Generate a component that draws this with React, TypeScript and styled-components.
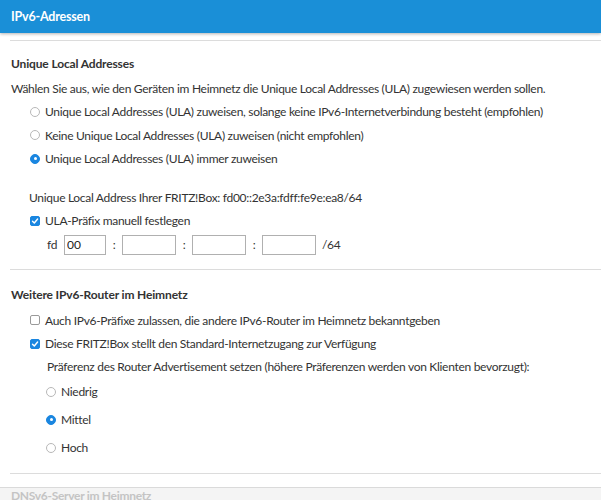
import React from 'react';
import styled, {createGlobalStyle} from 'styled-components';

const GlobalStyle = createGlobalStyle`
  html, body {
    margin: 0;
    padding: 0;
    overflow: hidden;
    background: #fff;
  }
  body {
    font-family: Lato, "Noto Sans", sans-serif;
    font-size: 12px;
    letter-spacing: -0.3px;
    color: #333;
  }
`

const Page = styled.div`
  height: 500px;
  overflow: hidden;
  display: flex;
  flex-direction: column;
`

const Header = styled.header`
  height: 33px;
  flex-shrink: 0;
  background: #1a8fd7;
  color: #fff;
  font-size: 12.5px;
  font-weight: 700;
  letter-spacing: -0.2px;
  display: flex;
  align-items: center;
  padding-left: 11px;
  box-shadow: 0 1px 3px rgba(0, 0, 0, 0.3);
`

const Content = styled.main`
  padding: 7px 0 0 10px;
`

const Section = styled.section<{$top: number; $bottom: number}>`
  border-top: 1px solid #dcdcdc;
  padding: ${p => p.$top}px 0 ${p => p.$bottom}px 1px;
  display: flex;
  flex-direction: column;
`

const Heading = styled.h2`
  margin: 0;
  font-size: 12px;
  font-weight: 700;
  letter-spacing: -0.15px;
  height: 24px;
  line-height: 24px;
`

const Row = styled.div<{$indent?: number; $h?: number}>`
  display: flex;
  align-items: center;
  gap: 5px;
  height: ${p => p.$h ?? 23.5}px;
  padding-left: ${p => p.$indent ?? 0}px;
  white-space: nowrap;
`

const Spacer = styled.div<{$h: number}>`
  height: ${p => p.$h}px;
`

const RadioDot = styled.span<{$on?: boolean}>`
  width: 10px;
  height: 10px;
  box-sizing: border-box;
  border-radius: 50%;
  flex-shrink: 0;
  border: 1px solid ${p => (p.$on ? '#1a86e0' : '#b8b8b8')};
  background: ${p => (p.$on ? '#1a86e0' : '#fff')};
  display: flex;
  align-items: center;
  justify-content: center;

  &::after {
    content: '';
    width: 3px;
    height: 3px;
    border-radius: 50%;
    background: #fff;
    display: ${p => (p.$on ? 'block' : 'none')};
  }
`

const CheckBox = styled.span<{$on?: boolean}>`
  width: 10px;
  height: 10px;
  box-sizing: border-box;
  border-radius: 2px;
  flex-shrink: 0;
  border: 1px solid ${p => (p.$on ? '#1a86e0' : '#9a9a9a')};
  background: ${p => (p.$on ? '#1a86e0' : '#fff')};
  display: flex;
  align-items: center;
  justify-content: center;
`

const FieldRow = styled.div`
  display: flex;
  align-items: center;
  height: 24px;
  padding-left: 36px;
`

const Label = styled.span`
  width: 17px;
`

const Box = styled.input<{$w: number}>`
  width: ${p => p.$w}px;
  height: 20px;
  box-sizing: border-box;
  border: 1px solid #b0b0b0;
  font-family: inherit;
  font-size: 12px;
  color: #222;
  padding: 0 2px;
  margin: 0;
  outline: none;
`

const Colon = styled.span`
  width: 16px;
  text-align: center;
`

const Suffix = styled.span`
  margin-left: 6px;
`

const NextSection = styled.section`
  margin-top: 13px;
  border-top: 1px solid #dadada;
  background: #f4f4f4;
  flex: 1;
  padding: 0 11px;
  font-weight: 700;
  color: #c4c4c4;
`

function Radio({on, children, indent, h}: {on?: boolean; children: React.ReactNode; indent?: number; h?: number}) {
  return (
    <Row $indent={indent} $h={h}>
      <RadioDot $on={on} />
      <span>{children}</span>
    </Row>
  );
}

function Check({on, children}: {on?: boolean; children: React.ReactNode}) {
  return (
    <Row $indent={19}>
      <CheckBox $on={on}>
        {on && (
          <svg width="8" height="8" viewBox="0 0 8 8">
            <path d="M1.5 4.2 L3.3 6 L6.6 2" fill="none" stroke="#fff" strokeWidth="1.4" strokeLinecap="round" strokeLinejoin="round" />
          </svg>
        )}
      </CheckBox>
      <span>{children}</span>
    </Row>
  );
}

function App() {
  return (
    <Page>
      <GlobalStyle />
      <Header>IPv6-Adressen</Header>
      <Content>
        <Section $top={11} $bottom={12}>
          <Heading>Unique Local Addresses</Heading>
          <Row $h={24}>Wählen Sie aus, wie den Geräten im Heimnetz die Unique Local Addresses (ULA) zugewiesen werden sollen.</Row>
          <Radio indent={19}>Unique Local Addresses (ULA) zuweisen, solange keine IPv6-Internetverbindung besteht (empfohlen)</Radio>
          <Radio indent={19}>Keine Unique Local Addresses (ULA) zuweisen (nicht empfohlen)</Radio>
          <Radio indent={19} on>Unique Local Addresses (ULA) immer zuweisen</Radio>
          <Spacer $h={14.5} />
          <Row $indent={18} $h={24}>Unique Local Address Ihrer FRITZ!Box: fd00::2e3a:fdff:fe9e:ea8/64</Row>
          <Check on>ULA-Präfix manuell festlegen</Check>
          <FieldRow>
            <Label>fd</Label>
            <Box $w={42} defaultValue="00" />
            <Colon>:</Colon>
            <Box $w={54} />
            <Colon>:</Colon>
            <Box $w={54} />
            <Colon>:</Colon>
            <Box $w={54} />
            <Suffix>/64</Suffix>
          </FieldRow>
        </Section>
        <Section $top={13} $bottom={11}>
          <Heading>Weitere IPv6-Router im Heimnetz</Heading>
          <Spacer $h={2} />
          <Check>Auch IPv6-Präfixe zulassen, die andere IPv6-Router im Heimnetz bekanntgeben</Check>
          <Check on>Diese FRITZ!Box stellt den Standard-Internetzugang zur Verfügung</Check>
          <Row $indent={36} $h={22}>Präferenz des Router Advertisement setzen (höhere Präferenzen werden von Klienten bevorzugt):</Row>
          <Radio indent={35} h={28}>Niedrig</Radio>
          <Radio indent={35} h={28} on>Mittel</Radio>
          <Radio indent={35} h={28}>Hoch</Radio>
        </Section>
        <Section $top={0} $bottom={0} />
      </Content>
      <NextSection>DNSv6-Server im Heimnetz</NextSection>
    </Page>
  );
}

export default App;
